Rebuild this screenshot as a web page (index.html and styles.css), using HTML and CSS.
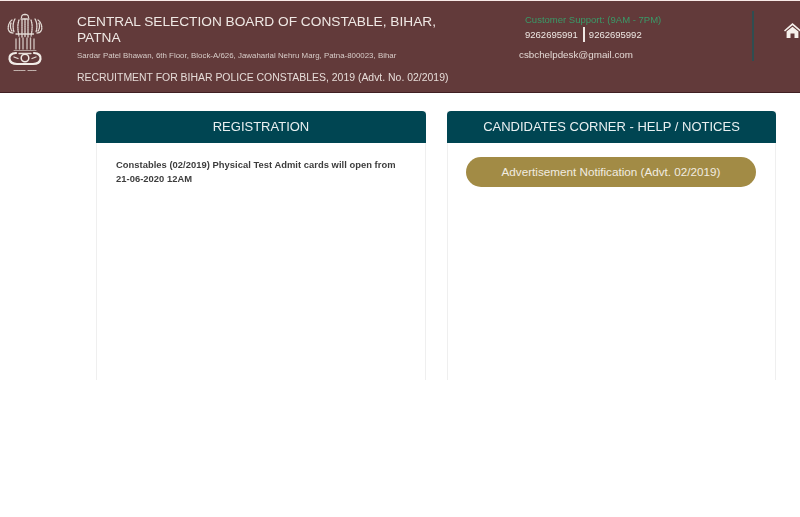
FILE: index.html
```html
<!DOCTYPE html>
<html lang="en">
<head>
<meta charset="utf-8">
<title>Central Selection Board of Constable, Bihar</title>
<link rel="stylesheet" href="styles.css">
</head>
<body>
<header class="topbar">
  <div class="emblem">
    <svg class="emblem-art" width="36" height="60" viewBox="0 0 36 60" fill="none" stroke="#e4dcd6" stroke-linecap="round">
      <g stroke-width="1.3" stroke-dasharray="1.4 .9">
        <path d="M18 1.500c-2.200 0-3.500 1-3.500 3"/>
        <path d="M18 1.500c2.200 0 3.500 1 3.500 3"/>
        <path d="M14 6h8"/>
        <path d="M12 7c-1.500 4-1.500 9 0 16"/>
        <path d="M15 7v17"/>
        <path d="M18 6v18"/>
        <path d="M21 7v17"/>
        <path d="M24 7c1.500 4 1.500 9 0 16"/>
        <path d="M8 6c-2 3-2.500 8-1 13"/>
        <path d="M28 6c2 3 2.500 8 1 13"/>
        <path d="M5 7c-3 2-4.500 7-3.500 10 .8 2 2.500 3 4.500 3"/>
        <path d="M31 7c3 2 4.500 7 3.500 10-.8 2-2.500 3-4.500 3"/>
        <path d="M4 10c-1 3-.5 6 1 8"/>
        <path d="M32 10c1 3 .5 6-1 8"/>
        <path d="M9 21h18"/>
      </g>
      <g stroke-width="1.400" opacity=".8">
        <path d="M9 26v10"/>
        <path d="M12.500 25v11"/>
        <path d="M16 25v11"/>
        <path d="M20 25v11"/>
        <path d="M23.500 25v11"/>
        <path d="M27 26v10"/>
      </g>
      <path d="M7 37.500h22" stroke-width="1" opacity=".6"/>
      <path d="M9 40c-5 0-7 3-6.500 6s3.500 5 7.500 5h16c4 0 7-2 7.500-5s-1.500-6-6.500-6" stroke="#f1ebe6" stroke-width="2.200"/>
      <circle cx="18" cy="45" r="3.800" stroke="#f1ebe6" stroke-width="1.500"/>
      <path d="M7 44l4 1.500M29 44l-4 1.500M12 40.500h12" stroke-width="1.300"/>
      <path d="M7 57.500h11M21 57.500h8" stroke-width="1.200" stroke-dasharray="1.500 .9" opacity=".75"/>
    </svg>
  </div>
  <div class="title-block">
    <h1 class="board-name">CENTRAL SELECTION BOARD OF CONSTABLE, BIHAR, PATNA</h1>
    <p class="address">Sardar Patel Bhawan, 6th Floor, Block-A/626, Jawaharlal Nehru Marg, Patna-800023, Bihar</p>
    <p class="recruitment">RECRUITMENT FOR BIHAR POLICE CONSTABLES, 2019 (Advt. No. 02/2019)</p>
  </div>
  <div class="support">
    <p class="support-label">Customer Support: (9AM - 7PM)</p>
    <p class="phones"><span class="phone phone-first">9262695991</span><span class="phone">9262695992</span></p>
    <p class="email">csbchelpdesk@gmail.com</p>
  </div>
  <div class="divider"></div>
  <a class="home" href="#" aria-label="Home">
    <svg width="17" height="15" viewBox="0 0 17 15">
      <path fill="#f6f1ec" d="M8.500 0L0 7.400l1 1.200 7.500-6.300L16 8.600l1-1.200z"/>
      <path fill="#f6f1ec" d="M2.600 8.600L8.500 3.700l5.900 4.900V15h-3.900v-4.400h-4V15H2.600z"/>
    </svg>
  </a>
</header>
<main class="panels">
  <section class="card">
    <h2 class="card-head">REGISTRATION</h2>
    <div class="card-body notice-body">
      <p class="notice">Constables (02/2019) Physical Test Admit cards will open from<br>21-06-2020 12AM</p>
    </div>
  </section>
  <section class="card">
    <h2 class="card-head">CANDIDATES CORNER - HELP / NOTICES</h2>
    <div class="card-body links-body">
      <a class="pill" href="#">Advertisement Notification (Advt. 02/2019)</a>
    </div>
  </section>
</main>
</body>
</html>
```
FILE: styles.css
```css
* { box-sizing: border-box; }
html, body { margin: 0; padding: 0; }
body {
  width: 800px;
  height: 517px;
  overflow: hidden;
  background: #fff;
  font-family: "Liberation Sans", Arial, sans-serif;
}
p, h1, h2 { margin: 0; font-weight: normal; }

.topbar {
  display: flex;
  height: 93px;
  background: #623a3a;
  border-top: 1px solid #f7e9e6;
  border-bottom: 1px solid #3f1f22;
  color: #ebe3df;
  overflow: hidden;
}
.emblem { flex: 0 0 77px; padding: 12px 0 0 7px; }
.emblem-art { display: block; filter: blur(.7px); }
.title-block { flex: 0 0 442px; padding-top: 13px; filter: blur(.3px); }
.board-name {
  font-size: 13.7px;
  line-height: 15.5px;
  width: 372px;
  color: #efe8e4;
}
.address {
  margin-top: 5px;
  font-size: 7.9px;
  line-height: 12px;
  color: #d8cdc9;
}
.recruitment {
  margin-top: 9px;
  font-size: 10.45px;
  line-height: 14px;
  color: #e6dcd8;
}
.support { flex: 0 0 233px; padding-top: 12px; font-size: 9.5px; filter: blur(.3px); }
.support-label { margin-left: 6px; line-height: 13px; color: #3a9a68; }
.phones { display: flex; margin: 1px 0 0 6px; line-height: 15px; color: #efe8e4; }
.phone-first {
  padding-right: 5px;
  margin-right: 4px;
  border-right: 2px solid #efe8e4;
}
.email { margin-top: 6px; font-size: 9.8px; line-height: 13px; color: #e4d9d5; }
.divider { flex: 0 0 2px; height: 50px; margin-top: 10px; background: #2f4d50; }
.home { margin: 22px 0 0 30px; line-height: 0; }

.panels {
  display: grid;
  grid-template-columns: 330px 329px;
  column-gap: 21px;
  padding: 18px 0 0 96px;
}
.card {
  height: 269px;
  border-left: 1px solid #efefef;
  border-right: 1px solid #efefef;
}
.card-head {
  margin: 0 -1px;
  height: 32px;
  background: #004552;
  border-radius: 4px 4px 0 0;
  color: #e9f0f1;
  font-size: 13px;
  line-height: 32px;
  text-align: center;
  filter: blur(.25px);
}
.notice-body { padding: 15px 19px 0; }
.notice {
  font-size: 9.4px;
  line-height: 14px;
  font-weight: bold;
  letter-spacing: .03px;
  color: #3d3d3d;
  filter: blur(.25px);
}
.links-body { padding: 14px 19px 0 18px; }
.pill {
  display: block;
  height: 30px;
  border-radius: 15px;
  background: #a28b45;
  color: #f1ece0;
  font-size: 11.7px;
  line-height: 30px;
  text-align: center;
  text-decoration: none;
}
```
